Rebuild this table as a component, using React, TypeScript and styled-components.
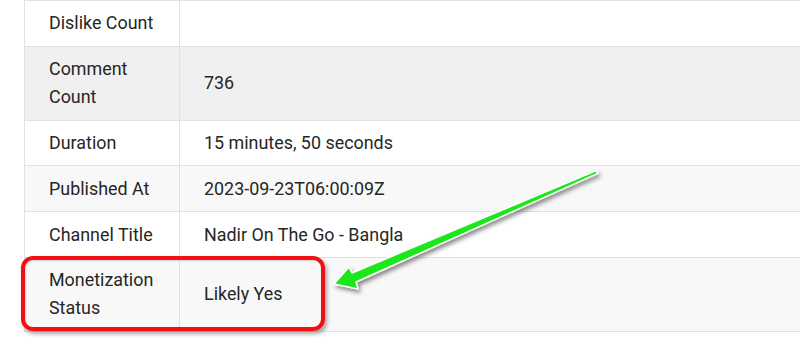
import React from "react";
import styled, { createGlobalStyle } from "styled-components";

const Global = createGlobalStyle`
  html, body { margin: 0; padding: 0; background: #ffffff; }
  body { font-family: Roboto, "Liberation Sans", Arial, sans-serif; }
`;

const Page = styled.div`
  position: relative;
  width: 800px;
  height: 350px;
  overflow: hidden;
  padding-left: 24px;
  box-sizing: border-box;
`;

const Table = styled.table`
  border-collapse: collapse;
  width: 820px;
  font-size: 17.9px;
  line-height: 28px;
  color: #262626;
`;

const Row = styled.tr<{ $bg: string }>`
  background: ${(p) => p.$bg};
`;

const Cell = styled.td`
  border: 1px solid #dee2e6;
  padding: 8.4px 24px 8.4px 24px;
  vertical-align: middle;
  text-align: left;
`;

const LabelCell = styled(Cell)`
  width: 106px;
`;

const Highlight = styled.div`
  position: absolute;
  left: 21px;
  top: 256px;
  width: 304px;
  height: 75px;
  box-sizing: border-box;
  border: 4px solid #f01010;
  border-radius: 12px;
  box-shadow: 2px 3px 4px rgba(0, 0, 0, 0.35), inset 1px 1px 2px rgba(0, 0, 0, 0.15);
`;

const ArrowSvg = styled.svg`
  position: absolute;
  left: 0;
  top: 0;
  pointer-events: none;
`;

const rows: { label: string; value: string; bg: string }[] = [
  { label: "Dislike Count", value: "", bg: "#ffffff" },
  { label: "Comment Count", value: "736", bg: "#f0f0f0" },
  { label: "Duration", value: "15 minutes, 50 seconds", bg: "#ffffff" },
  { label: "Published At", value: "2023-09-23T06:00:09Z", bg: "#f8f8f8" },
  { label: "Channel Title", value: "Nadir On The Go - Bangla", bg: "#ffffff" },
  { label: "Monetization Status", value: "Likely Yes", bg: "#f8f8f8" },
];

export default function App() {
  return (
    <>
      <Global />
      <Page>
        <Table>
          <tbody>
            {rows.map((r) => (
              <Row key={r.label} $bg={r.bg}>
                <LabelCell>{r.label}</LabelCell>
                <Cell>{r.value}</Cell>
              </Row>
            ))}
          </tbody>
        </Table>
        <Highlight />
        <ArrowSvg width="800" height="350" viewBox="0 0 800 350">
          <defs>
            <filter id="sh" x="-10%" y="-20%" width="130%" height="160%">
              <feDropShadow dx="2" dy="3" stdDeviation="2" floodColor="#000" floodOpacity="0.45" />
            </filter>
          </defs>
          <polygon
            points="334,284 358,289 356,282 597.6,173.4 596.4,170.6 352,273 349,267"
            fill="#1ee61e"
            stroke="#ffffff"
            strokeWidth="1.5"
            strokeLinejoin="round"
            filter="url(#sh)"
          />
        </ArrowSvg>
      </Page>
    </>
  );
}
